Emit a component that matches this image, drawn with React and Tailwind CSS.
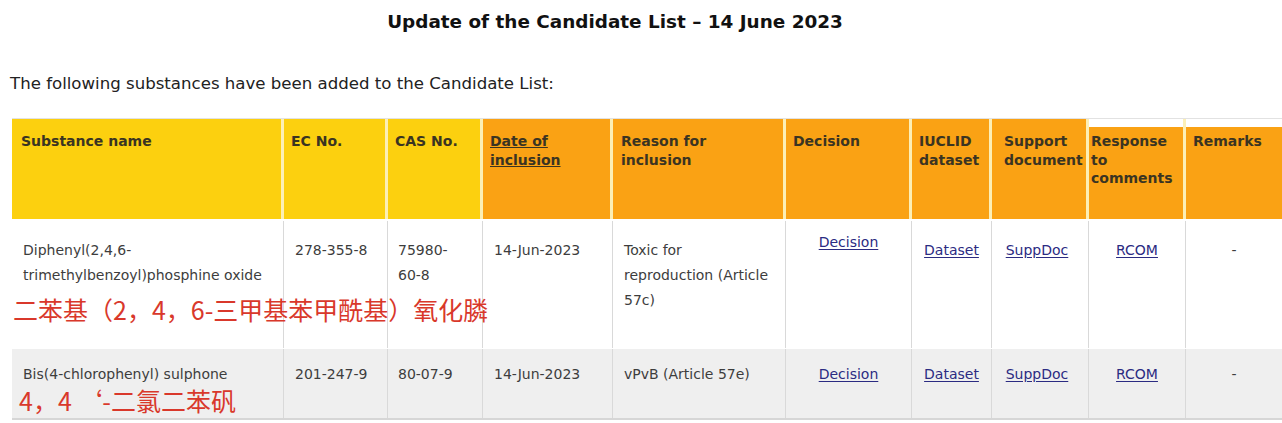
import React from "react";

const F = { fontFamily: '"DejaVu Sans", Verdana, sans-serif' };
const CJK = { fontFamily: '"Noto Sans CJK SC", "DejaVu Sans", sans-serif' };

const GRID =
  "grid grid-cols-[272px_104px_95px_130px_173px_126px_80px_97px_97px_96px]";

function H({ children, color, last, inset, cls = "" }) {
  const border = last ? "" : "border-r-[3px] border-[#fcefb6]";
  if (inset) {
    return (
      <div className={`flex flex-col bg-white pt-[8px] ${border}`}>
        <div className={`flex-1 ${color} pl-[1px] pt-[5px] ${cls}`}>{children}</div>
      </div>
    );
  }
  return <div className={`${color} ${border} pl-[7px] pt-[13px] ${cls}`}>{children}</div>;
}

function C({ children, last, cls = "" }) {
  const border = last ? "" : "border-r border-[#d9d9d9]";
  return <div className={`${border} ${cls}`}>{children}</div>;
}

function L({ children }) {
  return <span className="text-[#2b2b82] underline underline-offset-2">{children}</span>;
}

const YEL = "bg-[#fcd00f]";
const ORA = "bg-[#faa214]";

export default function App() {
  return (
    <div className="w-[1282px] h-[423px] overflow-hidden bg-white text-[#333]" style={F}>
      <div className="pt-[10px] pr-[52px] text-center text-[18.4px] leading-[24px] font-bold text-[#111]">
        Update of the Candidate List – 14 June 2023
      </div>
      <div className="mt-[38px] pl-[10px] text-[16.6px] leading-[24px] text-[#222]">
        The following substances have been added to the Candidate List:
      </div>
      <div className="ml-[12px] mt-[22px] w-[1270px]">
        {/* header */}
        <div className={`${GRID} h-[101px] border-t border-[#e2e2e2] text-[14px] leading-[18.5px] font-bold text-[#3a3422]`}>
          <H color={YEL} cls="pl-[9px]">Substance name</H>
          <H color={YEL}>EC No.</H>
          <H color={YEL}>CAS No.</H>
          <H color={ORA}>
            <span className="underline">Date of</span>
            <br />
            <span className="underline">inclusion</span>
          </H>
          <H color={ORA} cls="pl-[8px]">
            Reason for
            <br />
            inclusion
          </H>
          <H color={ORA}>Decision</H>
          <H color={ORA}>
            IUCLID
            <br />
            dataset
          </H>
          <H color={ORA} cls="pl-[12px]">
            Support
            <br />
            document
          </H>
          <H color={ORA} inset cls="pl-[2px]">
            Response
            <br />
            to
            <br />
            comments
          </H>
          <H color={ORA} inset last cls="pl-[7px]">
            Remarks
          </H>
        </div>

        {/* row 1 */}
        <div className={`${GRID} mt-[2px] h-[127px] text-[14px] leading-[25px] text-[#3d3d3d]`}>
          <C cls="relative pl-[11px] pt-[17px]">
            Diphenyl(2,4,6-
            <br />
            trimethylbenzoyl)phosphine oxide
            <div
              className="relative z-10 mt-[5px] ml-[-10px] whitespace-nowrap text-[25px] leading-[32px] text-[#d9382b]"
              style={CJK}
            >
              二苯基（2，4，6-三甲基苯甲酰基）氧化膦
            </div>
          </C>
          <C cls="pl-[11px] pt-[17px]">278-355-8</C>
          <C cls="pl-[10px] pt-[17px]">
            75980-
            <br />
            60-8
          </C>
          <C cls="pl-[11px] pt-[17px]">14-Jun-2023</C>
          <C cls="pl-[11px] pt-[17px]">
            Toxic for
            <br />
            reproduction (Article
            <br />
            57c)
          </C>
          <C cls="pt-[9px] text-center">
            <L>Decision</L>
          </C>
          <C cls="pt-[17px] text-center">
            <L>Dataset</L>
          </C>
          <C cls="pt-[17px] pr-[6px] text-center">
            <L>SuppDoc</L>
          </C>
          <C cls="pt-[17px] text-center">
            <L>RCOM</L>
          </C>
          <C last cls="pt-[17px] text-center">
            -
          </C>
        </div>

        {/* row 2 */}
        <div
          className={`${GRID} mt-[1px] h-[71px] bg-[#efefef] border-b-[2px] border-[#d6d6d6] text-[14px] leading-[25px] text-[#3d3d3d]`}
        >
          <C cls="pl-[11px] pt-[13px]">
            Bis(4-chlorophenyl) sulphone
            <div
              className="whitespace-nowrap text-[25px] leading-[26px] ml-[-4px] text-[#d9382b]"
              style={CJK}
            >
              4，4 ‘-二氯二苯矾
            </div>
          </C>
          <C cls="pl-[11px] pt-[13px]">201-247-9</C>
          <C cls="pl-[10px] pt-[13px]">80-07-9</C>
          <C cls="pl-[11px] pt-[13px]">14-Jun-2023</C>
          <C cls="pl-[11px] pt-[13px]">vPvB (Article 57e)</C>
          <C cls="pt-[13px] text-center">
            <L>Decision</L>
          </C>
          <C cls="pt-[13px] text-center">
            <L>Dataset</L>
          </C>
          <C cls="pt-[13px] pr-[6px] text-center">
            <L>SuppDoc</L>
          </C>
          <C cls="pt-[13px] text-center">
            <L>RCOM</L>
          </C>
          <C last cls="pt-[13px] text-center">
            -
          </C>
        </div>
      </div>
    </div>
  );
}
